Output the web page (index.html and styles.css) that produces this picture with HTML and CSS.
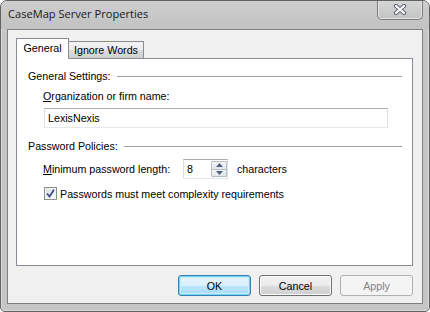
FILE: index.html
```html
<!DOCTYPE html>
<html>
	<head>
		<title>CaseMap Server Properties</title>
		<meta charset="UTF-8">
		<link rel="stylesheet" href="styles.css">
	</head>
	<body>
		<div class="window">
			<div class="titlebar">
				<span class="title">CaseMap Server Properties</span>
				<button class="close-button" aria-label="Close">
					<svg width="14" height="11" viewBox="0 0 14 11">
						<path d="M3 2 L11 9 M11 2 L3 9" stroke="#5c6470" stroke-width="4.2" stroke-linecap="round"/>
						<path d="M3 2 L11 9 M11 2 L3 9" stroke="#ffffff" stroke-width="2.2" stroke-linecap="round"/>
					</svg>
				</button>
			</div>

			<div class="client">
				<div class="tabs">
					<div class="tab selected">General</div>
					<div class="tab">Ignore Words</div>
				</div>

				<div class="panel">
					<div class="group-head">
						<span>General Settings:</span>
						<span class="rule"></span>
					</div>
					<div class="field-label"><u>O</u>rganization or firm name:</div>
					<div class="textbox">LexisNexis</div>

					<div class="group-head second">
						<span>Password Policies:</span>
						<span class="rule"></span>
					</div>
					<div class="spin-row">
						<span class="spin-label"><u>M</u>inimum password length:</span>
						<div class="spin">
							<span class="spin-value">8</span>
							<div class="spin-buttons">
								<span class="spin-btn up">
									<svg width="7" height="4" viewBox="0 0 7 4"><path d="M0 4 L3.5 0 L7 4 Z" fill="#4d6185"/></svg>
								</span>
								<span class="spin-btn down">
									<svg width="7" height="4" viewBox="0 0 7 4"><path d="M0 0 L3.5 4 L7 0 Z" fill="#4d6185"/></svg>
								</span>
							</div>
						</div>
						<span class="spin-unit">characters</span>
					</div>
					<div class="check-row">
						<span class="checkbox">
							<svg width="9" height="9" viewBox="0 0 9 9">
								<path d="M1 4.5 L3.5 7.5 L8 0.8" fill="none" stroke="#3a4f8a" stroke-width="1.8"/>
							</svg>
						</span>
						<span>Passwords must meet complexity requirements</span>
					</div>
				</div>

				<div class="buttons">
					<button class="push default">OK</button>
					<button class="push">Cancel</button>
					<button class="push disabled">Apply</button>
				</div>
			</div>
		</div>
	</body>
</html>
```

FILE: styles.css
```css
body {
	margin: 0;
	background: #ffffff;
	font-family: "Liberation Sans", Arial, sans-serif;
	font-size: 10.7px;
	color: #000000;
}

.window {
	width: 430px;
	height: 312px;
	box-sizing: border-box;
	border: 1px solid #626262;
	border-radius: 7px 7px 5px 5px;
	background: #c6c6c6;
	box-shadow: inset 0 0 0 1px #dcdcdc;
	display: flex;
	flex-direction: column;
	overflow: hidden;
}

.titlebar {
	height: 28px;
	display: flex;
	align-items: flex-start;
	background: linear-gradient(to bottom, #cecece, #c2c2c2);
}

.title {
	font-family: "Open Sans", "Noto Sans", sans-serif;
	font-size: 11.1px;
	color: #1a1a1a;
	margin-left: 7px;
	margin-top: 5px;
}

.close-button {
	margin-left: auto;
	margin-right: 6px;
	margin-top: -1px;
	width: 46px;
	height: 20px;
	padding: 0;
	border: 1px solid #7b7b7b;
	border-top: none;
	border-radius: 0 0 5px 5px;
	background: linear-gradient(to bottom, #d7d7d7, #c3c3c3);
	box-shadow: inset 0 0 0 1px #e4e4e4;
	display: flex;
	align-items: center;
	justify-content: center;
}

.client {
	flex: 1;
	margin: 0 6px 7px 6px;
	border: 1px solid #7f7f7f;
	background: #f0f0f0;
	padding: 8px 9px 0 8px;
	display: flex;
	flex-direction: column;
}

.tabs {
	display: flex;
	align-items: flex-end;
	height: 20px;
	position: relative;
	z-index: 1;
}

.tab {
	height: 17px;
	box-sizing: border-box;
	border: 1px solid #898c95;
	border-bottom: none;
	padding: 0 5px;
	line-height: 16px;
	background: linear-gradient(to bottom, #f2f2f2, #ebebeb 50%, #dddddd 51%, #cfcfcf);
	margin-left: -1px;
}

.tab.selected {
	height: 21px;
	margin-bottom: -1px;
	margin-left: 0;
	width: 53px;
	text-align: center;
	background: #ffffff;
	line-height: 19px;
	position: relative;
	z-index: 2;
}

.panel {
	height: 208px;
	box-sizing: border-box;
	border: 1px solid #898c95;
	background: #ffffff;
	padding: 10px 10px 0 11px;
}

.group-head {
	display: flex;
	align-items: center;
	gap: 6px;
	height: 14px;
}

.group-head.second {
	margin-top: 11px;
}

.rule {
	flex: 1;
	height: 1px;
	background: #a0a0a0;
}

.field-label {
	margin-top: 6px;
	margin-left: 15px;
	line-height: 14px;
}

.textbox {
	margin-top: 5px;
	margin-left: 16px;
	width: 344px;
	height: 20px;
	box-sizing: border-box;
	border: 1px solid #dbdfe6;
	border-top-color: #abadb3;
	border-bottom-color: #e3e9ef;
	padding-left: 3px;
	line-height: 18px;
}

.spin-row {
	margin-top: 6px;
	margin-left: 15px;
	display: flex;
	align-items: center;
	height: 20px;
}

.spin-label {
	width: 140px;
}

.spin {
	width: 45px;
	height: 20px;
	box-sizing: border-box;
	border: 1px solid #dbdfe6;
	border-top-color: #abadb3;
	border-bottom-color: #e3e9ef;
	display: flex;
}

.spin-value {
	flex: 1;
	padding-left: 3px;
	line-height: 18px;
}

.spin-buttons {
	width: 16px;
	display: flex;
	flex-direction: column;
	padding: 1px 0;
	box-sizing: border-box;
}

.spin-btn {
	flex: 1;
	border: 1px solid #b6bcc6;
	border-radius: 1px;
	background: linear-gradient(to bottom, #f6f6f6, #e2e4e8);
	display: flex;
	align-items: center;
	justify-content: center;
}

.spin-btn.down {
	margin-top: -1px;
}

.spin-unit {
	margin-left: 9px;
}

.check-row {
	margin-top: 8px;
	margin-left: 16px;
	display: flex;
	align-items: center;
	gap: 3px;
	height: 13px;
}

.checkbox {
	width: 13px;
	height: 13px;
	box-sizing: border-box;
	border: 1px solid #8e8f8f;
	background: linear-gradient(135deg, #dcdcdc, #ffffff);
	box-shadow: inset 0 0 0 1px #f4f4f4;
	display: flex;
	align-items: center;
	justify-content: center;
}

.buttons {
	display: flex;
	justify-content: flex-end;
	gap: 8px;
	margin-top: 9px;
}

.push {
	width: 73px;
	height: 21px;
	padding: 0;
	font-family: "Liberation Sans", Arial, sans-serif;
	font-size: 10.7px;
	color: #000000;
	border: 1px solid #707070;
	border-radius: 3px;
	background: linear-gradient(to bottom, #f2f2f2, #ebebeb 50%, #dddddd 51%, #cfcfcf);
	box-shadow: inset 0 0 0 1px #fbfbfb;
}

.push.default {
	border-color: #3c7fb1;
	background: linear-gradient(to bottom, #eaf6fd, #d9f0fc 50%, #bee6fd 51%, #a7d9f5);
	box-shadow: inset 0 0 0 1px #6ed4f7, inset 0 0 0 2px #c9eefb;
}

.push.disabled {
	border-color: #adb2b5;
	background: #f4f4f4;
	box-shadow: none;
	color: #838383;
}
```
